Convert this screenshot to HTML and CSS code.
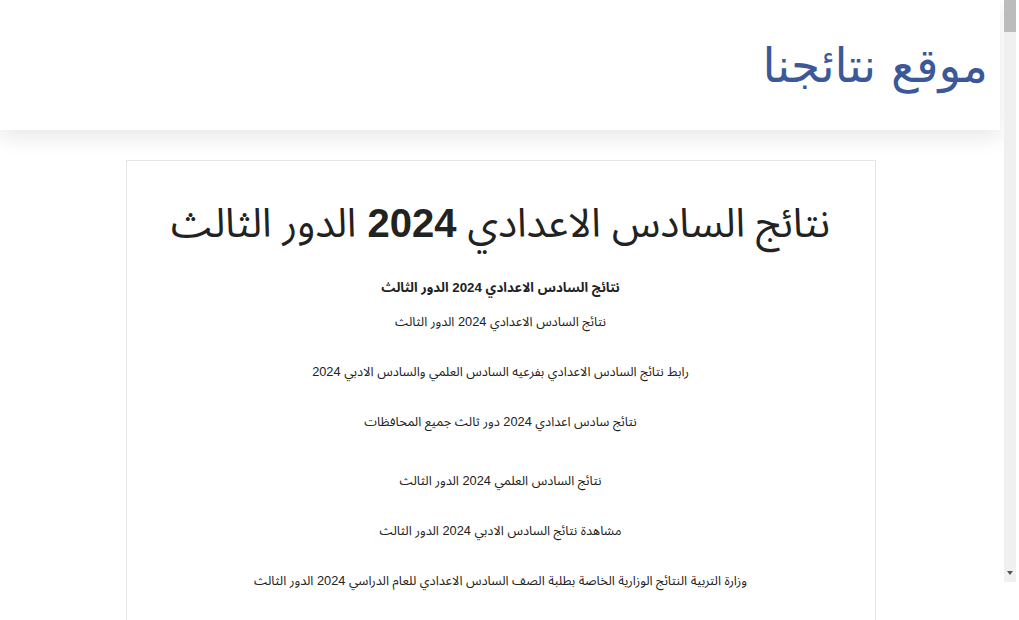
FILE: index.html
```html
<!DOCTYPE html>
<html lang="ar">
<head>
<meta charset="utf-8">
<title>موقع نتائجنا</title>
<link rel="stylesheet" href="styles.css">
</head>
<body>
<header class="site-header" dir="rtl">
  <div class="brand">موقع نتائجنا</div>
</header>
<main class="wrap" dir="rtl">
  <article class="card">
    <h1 class="title">نتائج السادس الاعدادي <b>2024</b> الدور الثالث</h1>
    <h2 class="sub">نتائج السادس الاعدادي 2024 الدور الثالث</h2>
    <p class="line l1">نتائج السادس الاعدادي 2024 الدور الثالث</p>
    <p class="line">رابط نتائج السادس الاعدادي بفرعيه السادس العلمي والسادس الادبي 2024</p>
    <p class="line">نتائج سادس اعدادي 2024 دور ثالث جميع المحافظات</p>
    <p class="line l4">نتائج السادس العلمي 2024 الدور الثالث</p>
    <p class="line">مشاهدة نتائج السادس الادبي 2024 الدور الثالث</p>
    <p class="line">وزارة التربية النتائج الوزارية الخاصة بطلبة الصف السادس الاعدادي للعام الدراسي 2024 الدور الثالث</p>
  </article>
</main>
<div class="scrollbar"><div class="thumb"></div><div class="arrow"></div></div>
</body>
</html>
```
FILE: styles.css
```css
html, body { margin: 0; padding: 0; }
body {
  background: #fff;
  font-family: "Liberation Sans", "Noto Sans Arabic", sans-serif;
  color: #222;
  width: 1004px;
  overflow: hidden;
  height: 620px;
}
.site-header {
  width: 1000px;
  height: 130px;
  background: #fff;
  box-shadow: 0 8px 20px rgba(0,0,0,0.09);
  box-sizing: border-box;
  padding: 38px 12px 0 0;
  position: relative;
  z-index: 1;
}
.brand {
  font-family: "DejaVu Sans", sans-serif;
  font-size: 47px;
  color: #3b5998;
  line-height: 56px;
}
.wrap {
  padding-top: 30px;
  display: flex;
  justify-content: center;
  width: 1001px;
}
.card {
  width: 750px;
  box-sizing: border-box;
  border: 1px solid #e6e6e6;
  border-bottom: none;
  height: 470px;
  text-align: center;
  padding: 36px 20px 0;
}
.title {
  margin: 0;
  font-size: 40px;
  font-weight: normal;
  line-height: 52px;
  color: #222;
}
.title b { font-weight: bold; }
.sub {
  margin: 29px 0 0;
  font-size: 13.3px;
  font-weight: bold;
  line-height: 20px;
}
.line {
  margin: 0;
  font-size: 12.8px;
  line-height: 20px;
  margin-top: 30px;
}
.line.l1 { margin-top: 14px; }
.line.l4 { margin-top: 39px; }
.scrollbar {
  position: fixed;
  top: 0;
  right: 3px;
  width: 12px;
  height: 582px;
  background: #f0f0f0;
}
.thumb {
  height: 32px;
  background: #bcbcbc;
}
.arrow {
  position: absolute;
  bottom: 7px;
  left: 3px;
  width: 0; height: 0;
  border-left: 3px solid transparent;
  border-right: 3px solid transparent;
  border-top: 4px solid #555;
}
```
